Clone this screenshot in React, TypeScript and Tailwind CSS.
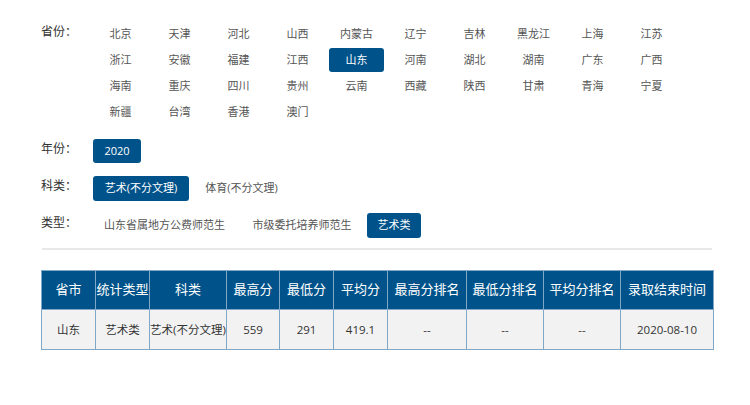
import React from "react";

const provinces = [
  "北京","天津","河北","山西","内蒙古","辽宁","吉林","黑龙江","上海","江苏",
  "浙江","安徽","福建","江西","山东","河南","湖北","湖南","广东","广西",
  "海南","重庆","四川","贵州","云南","西藏","陕西","甘肃","青海","宁夏",
  "新疆","台湾","香港","澳门",
];

const font = { fontFamily: '"Open Sans","Noto Sans CJK SC",sans-serif' };

function Btn({ active, children, className = "" }: { active?: boolean; children: React.ReactNode; className?: string }) {
  return (
    <div
      className={`h-[24px] flex items-center justify-center rounded-[3px] text-[11px] whitespace-nowrap ${
        active ? "bg-[#00538a] text-white" : "text-[#555]"
      } ${className}`}
    >
      {children}
    </div>
  );
}

function Label({ children }: { children: React.ReactNode }) {
  return <div className="w-[52px] h-[19px] flex items-center text-[12px] text-[#333] shrink-0">{children}</div>;
}

const cols = [54, 54, 77, 53, 54, 54, 79, 77, 77, 93];
const heads = ["省市","统计类型","科类","最高分","最低分","平均分","最高分排名","最低分排名","平均分排名","录取结束时间"];
const cells = ["山东","艺术类","艺术(不分文理)","559","291","419.1","--","--","--","2020-08-10"];

export default function App() {
  return (
    <div className="w-[750px] h-[405px] bg-white text-[#333]" style={font}>
      <div className="pl-[41px] pt-[22px]">
        <div className="flex">
          <Label>省份：</Label>
          <div className="grid grid-cols-[repeat(10,55px)] gap-x-[4px] gap-y-[2px]">
            {provinces.map((p) => (
              <Btn key={p} active={p === "山东"}>{p}</Btn>
            ))}
          </div>
        </div>
        <div className="flex mt-[15px]">
          <Label>年份：</Label>
          <Btn active className="w-[48px]">2020</Btn>
        </div>
        <div className="flex mt-[13px]">
          <Label>科类：</Label>
          <Btn active className="w-[96px] h-[25px]">艺术(不分文理)</Btn>
          <Btn className="w-[95px] ml-[5px] h-[25px]">体育(不分文理)</Btn>
        </div>
        <div className="flex mt-[12px]">
          <Label>类型：</Label>
          <Btn className="w-[143px] h-[25px]">山东省属地方公费师范生</Btn>
          <Btn className="w-[120px] ml-[6px] h-[25px]">市级委托培养师范生</Btn>
          <Btn active className="w-[54px] ml-[5px] h-[25px]">艺术类</Btn>
        </div>
      </div>
      <div className="ml-[42px] w-[670px] h-[2px] bg-[#e8e8e8] mt-[10px]" />
      <div className="ml-[41px] mt-[20px]">
        <table className="table-fixed border-collapse" style={{ width: 672 }}>
          <colgroup>
            {cols.map((w, i) => (
              <col key={i} style={{ width: w }} />
            ))}
          </colgroup>
          <thead>
            <tr className="h-[39px] bg-[#00538a]">
              {heads.map((h) => (
                <th key={h} className="border border-[#7ea7c8] text-white text-[13px] font-normal whitespace-nowrap p-0">
                  {h}
                </th>
              ))}
            </tr>
          </thead>
          <tbody>
            <tr className="h-[40px] bg-[#f2f2f2]">
              {cells.map((c, i) => (
                <td key={i} className="border border-[#7ea7c8] text-center text-[11.5px] text-[#333] whitespace-nowrap p-0">
                  {c}
                </td>
              ))}
            </tr>
          </tbody>
        </table>
      </div>
    </div>
  );
}
